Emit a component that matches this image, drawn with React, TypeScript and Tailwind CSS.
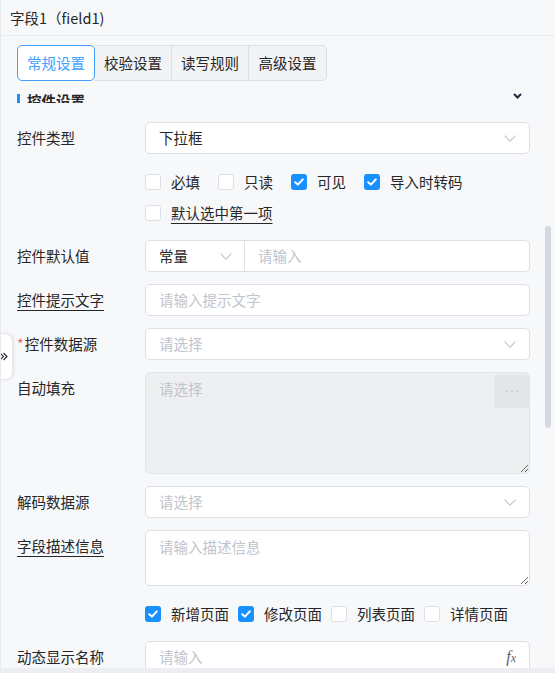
import React from 'react';

const Chevron = () => (
  <svg width="12" height="7" viewBox="0 0 12 7" fill="none">
    <path d="M0.5 0.6L6 6.2L11.5 0.6" stroke="#c0c4cc" strokeWidth="1.1" />
  </svg>
);

const Tick = () => (
  <svg width="10" height="8" viewBox="0 0 10 8" fill="none">
    <path d="M1.2 4.2L3.9 6.6L8.8 1.4" stroke="#fff" strokeWidth="2" strokeLinecap="round" strokeLinejoin="round" />
  </svg>
);

interface CheckProps {
  label: string;
  checked?: boolean;
  underline?: boolean;
  space?: string;
}

const Check: React.FC<CheckProps> = ({ label, checked, underline, space }) => (
  <div className={`flex items-center ${space || ''}`}>
    {checked ? (
      <span className="w-4 h-4 rounded-[3px] bg-[#1890ff] flex items-center justify-center">
        <Tick />
      </span>
    ) : (
      <span className="w-4 h-4 rounded-[3px] bg-white border border-[#dcdfe6]" />
    )}
    <span className={underline ? 'ml-[10px] underline underline-offset-[4px] decoration-[#262626]' : 'ml-[10px]'}>{label}</span>
  </div>
);

const Row: React.FC<{ label?: React.ReactNode; children: React.ReactNode }> = ({ label, children }) => (
  <div className="flex mb-[12px]">
    <div className="w-[128px] shrink-0 leading-[32px]">{label}</div>
    <div className="flex-1 min-w-0">{children}</div>
  </div>
);

const Field: React.FC<{ placeholder?: string; value?: string; arrow?: boolean; right?: React.ReactNode }> = ({
  placeholder,
  value,
  arrow,
  right,
}) => (
  <div className="h-[32px] bg-white border border-[#dcdfe6] rounded-[5px] flex items-center px-[13px]">
    <span className={value ? 'flex-1 text-[#262626]' : 'flex-1 text-[#c0c4cc]'}>{value || placeholder}</span>
    {arrow && <Chevron />}
    {right}
  </div>
);

export default function App() {
  return (
    <div className="w-[555px] h-[673px] bg-[#f7f8fa] flex flex-col overflow-hidden relative border-l border-[#e8eaee] text-[14.5px] text-[#262626] font-['Noto_Sans_CJK_SC',sans-serif]">
      <div className="h-[36px] shrink-0 flex items-center px-[9px] border-b border-[#ebedf0]">字段1（field1)</div>

      <div className="pl-[16px] pt-[9px] shrink-0">
        <div className="flex h-[36px]">
          <div className="w-[78px] flex items-center justify-center bg-white text-[#409eff] border border-[#409eff] rounded-[5px]">
            常规设置
          </div>
          <div className="w-[77px] flex items-center justify-center bg-[#f2f3f5] border-y border-r border-[#dcdfe6]">
            校验设置
          </div>
          <div className="w-[77px] flex items-center justify-center bg-[#f2f3f5] border-y border-r border-[#dcdfe6]">
            读写规则
          </div>
          <div className="w-[78px] flex items-center justify-center bg-[#f2f3f5] border-y border-r border-[#dcdfe6] rounded-r-[5px]">
            高级设置
          </div>
        </div>
      </div>

      <div className="flex-1 flex min-h-0">
        <div className="flex-1 min-w-0 overflow-hidden pl-[16px] pr-[15px]">
          {/* section title, half hidden under the tabs */}
          <div className="mt-[10px] h-[12px] overflow-hidden flex items-start justify-between">
            <div className="flex items-start leading-[20px] font-bold">
              <span className="w-[3px] h-[14px] mt-[3px] bg-[#1890ff]" />
              <span className="ml-[7px]">控件设置</span>
            </div>
            <svg className="mt-[2px] mr-[8px]" width="9" height="6" viewBox="0 0 9 6" fill="none">
              <path d="M1 1L4.5 4.5L8 1" stroke="#1d2b3a" strokeWidth="2" />
            </svg>
          </div>

          <div className="mt-[19px]">
            <Row label="控件类型">
              <Field value="下拉框" arrow />
            </Row>

            <Row>
              <div className="flex h-[31px] items-center">
                <Check label="必填" space="mr-[18px]" />
                <Check label="只读" space="mr-[18px]" />
                <Check label="可见" checked space="mr-[18px]" />
                <Check label="导入时转码" checked />
              </div>
              <div className="flex h-[31px] items-center">
                <Check label="默认选中第一项" underline />
              </div>
            </Row>

            <Row label="控件默认值">
              <div className="h-[32px] bg-white border border-[#dcdfe6] rounded-[5px] flex">
                <div className="w-[99px] shrink-0 flex items-center pl-[13px] pr-[12px] border-r border-[#dcdfe6]">
                  <span className="flex-1">常量</span>
                  <Chevron />
                </div>
                <div className="flex-1 flex items-center pl-[13px] text-[#c0c4cc]">请输入</div>
              </div>
            </Row>

            <Row label={<span className="underline underline-offset-[4px] decoration-[#262626]">控件提示文字</span>}>
              <Field placeholder="请输入提示文字" />
            </Row>

            <Row
              label={
                <span>
                  <span className="text-[#f56c6c] mr-[1px]">*</span>控件数据源
                </span>
              }
            >
              <Field placeholder="请选择" arrow />
            </Row>

            <Row label="自动填充">
              <div className="relative">
                <textarea
                  disabled
                  placeholder="请选择"
                  className="block w-full h-[102px] bg-[#eeeff1] border border-[#e0e3e8] rounded-[5px] px-[13px] py-[5px] leading-[22px] resize-y placeholder:text-[#c0c4cc] outline-none"
                />
                <div className="absolute top-[2px] right-[1px] w-[35px] h-[34px] rounded-[4px] bg-[#e5e6e9] flex items-center justify-center">
                  <svg width="12" height="2" viewBox="0 0 12 2">
                    <circle cx="1" cy="1" r="0.8" fill="#b4b7bc" />
                    <circle cx="6" cy="1" r="0.8" fill="#b4b7bc" />
                    <circle cx="11" cy="1" r="0.8" fill="#b4b7bc" />
                  </svg>
                </div>
              </div>
            </Row>

            <Row label="解码数据源">
              <Field placeholder="请选择" arrow />
            </Row>

            <Row label={<span className="underline underline-offset-[4px] decoration-[#262626]">字段描述信息</span>}>
              <textarea
                placeholder="请输入描述信息"
                className="block w-full h-[56px] bg-white border border-[#dcdfe6] rounded-[5px] px-[13px] py-[5px] leading-[22px] resize-y placeholder:text-[#c0c4cc] outline-none"
              />
            </Row>

            <Row>
              <div className="flex h-[31px] items-center">
                <Check label="新增页面" checked space="mr-[9px]" />
                <Check label="修改页面" checked space="mr-[9px]" />
                <Check label="列表页面" space="mr-[9px]" />
                <Check label="详情页面" />
              </div>
            </Row>

            <Row label="动态显示名称">
              <Field
                placeholder="请输入"
                right={
                  <span className="italic font-['Liberation_Serif',serif] text-[#606266] text-[16px] leading-none">
                    f<span className="text-[12px]">x</span>
                  </span>
                }
              />
            </Row>
          </div>
        </div>

        <div className="w-[10px] shrink-0">
          <div className="mt-[145px] w-[6px] h-[202px] rounded-full bg-[#d5d8de]" />
        </div>
      </div>

      <div className="h-[5px] shrink-0 bg-[#eceef1]" />

      <div className="absolute left-0 top-[333px] w-[12px] h-[47px] bg-white rounded-r-[8px] border border-l-0 border-[#e4e7ed] shadow-[1px_0_3px_rgba(0,0,0,0.08)] flex items-center">
        <svg width="7" height="9" viewBox="0 0 7 9" fill="none">
          <path d="M-1 1L2.5 4.5L-1 8M2.5 1L6 4.5L2.5 8" stroke="#303133" strokeWidth="1.2" />
        </svg>
      </div>
    </div>
  );
}
